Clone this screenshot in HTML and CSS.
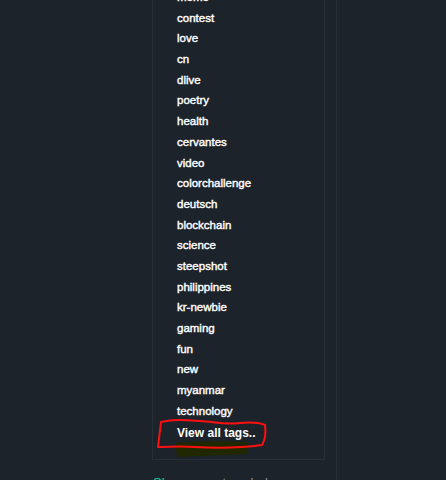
FILE: index.html
```html
<!DOCTYPE html>
<html>
<head>
<meta charset="utf-8">
<link rel="stylesheet" href="styles.css">
</head>
<body>
<div class="page">
  <aside class="sidebar">
    <div class="tagbox">
      <ul class="tags">
        <li>meme</li>
        <li>contest</li>
        <li>love</li>
        <li>cn</li>
        <li>dlive</li>
        <li>poetry</li>
        <li>health</li>
        <li>cervantes</li>
        <li>video</li>
        <li>colorchallenge</li>
        <li>deutsch</li>
        <li>blockchain</li>
        <li>science</li>
        <li>steepshot</li>
        <li>philippines</li>
        <li>kr-newbie</li>
        <li>gaming</li>
        <li>fun</li>
        <li>new</li>
        <li>myanmar</li>
        <li>technology</li>
      </ul>
      <a class="viewall">View all tags..</a>
    </div>
    <div class="nextsection"><span class="teal">Show</span> <span class="muted">more tags below</span></div>
  </aside>
</div>
<svg class="annot" width="446" height="480" viewBox="0 0 446 480">
  <path d="M176 443 C195 441 225 441 247 442 L248 454 C225 455 200 456 178 457 C176 452 175 447 176 443 Z" fill="#1f2800"/>
  <path d="M161 422 C175 419 185 420 200 421 C215 422 225 425 240 423 C252 422 260 423 265 425 C266 432 265 440 262 445 C240 448 215 448 195 447 C180 446 168 447 158 447 C159 439 160 430 161 422 Z" fill="none" stroke="#ff1010" stroke-width="2" stroke-linejoin="round"/>
</svg>
</body>
</html>
```
FILE: styles.css
```css
html, body {
  margin: 0;
  padding: 0;
  background: #1c232b;
  height: 100%;
  overflow: hidden;
}
.page {
  display: flex;
  padding-left: 152px;
}
.sidebar {
  width: 184px;
  border-right: 1px solid #26303a;
  min-height: 500px;
  margin-top: -13px;
}
.tagbox {
  border: 1px solid #26303a;
  border-top: none;
  padding: 0 0 16px 24px;
  box-sizing: border-box;
  width: 173px;
}
.tags {
  list-style: none;
  margin: 0;
  padding: 0;
}
.tags li {
  font-family: "Liberation Sans", Arial, sans-serif;
  font-size: 11.5px;
  line-height: 20.68px;
  color: #ffffff;
  font-weight: 400;
  -webkit-text-stroke: 0.4px #ffffff;
}
.viewall {
  display: block;
  font-family: "Liberation Sans", Arial, sans-serif;
  font-size: 12px;
  font-weight: 700;
  color: #ffffff;
  line-height: 20px;
  margin-top: 2px;
}
.nextsection {
  font-family: "Liberation Sans", Arial, sans-serif;
  font-size: 13px;
  line-height: 16px;
  padding-top: 15px;
  padding-left: 1px;
}
.teal { color: #1fc7a0; }
.muted { color: #8c8aa6; }
.annot {
  position: absolute;
  left: 0;
  top: 0;
  pointer-events: none;
}
```
